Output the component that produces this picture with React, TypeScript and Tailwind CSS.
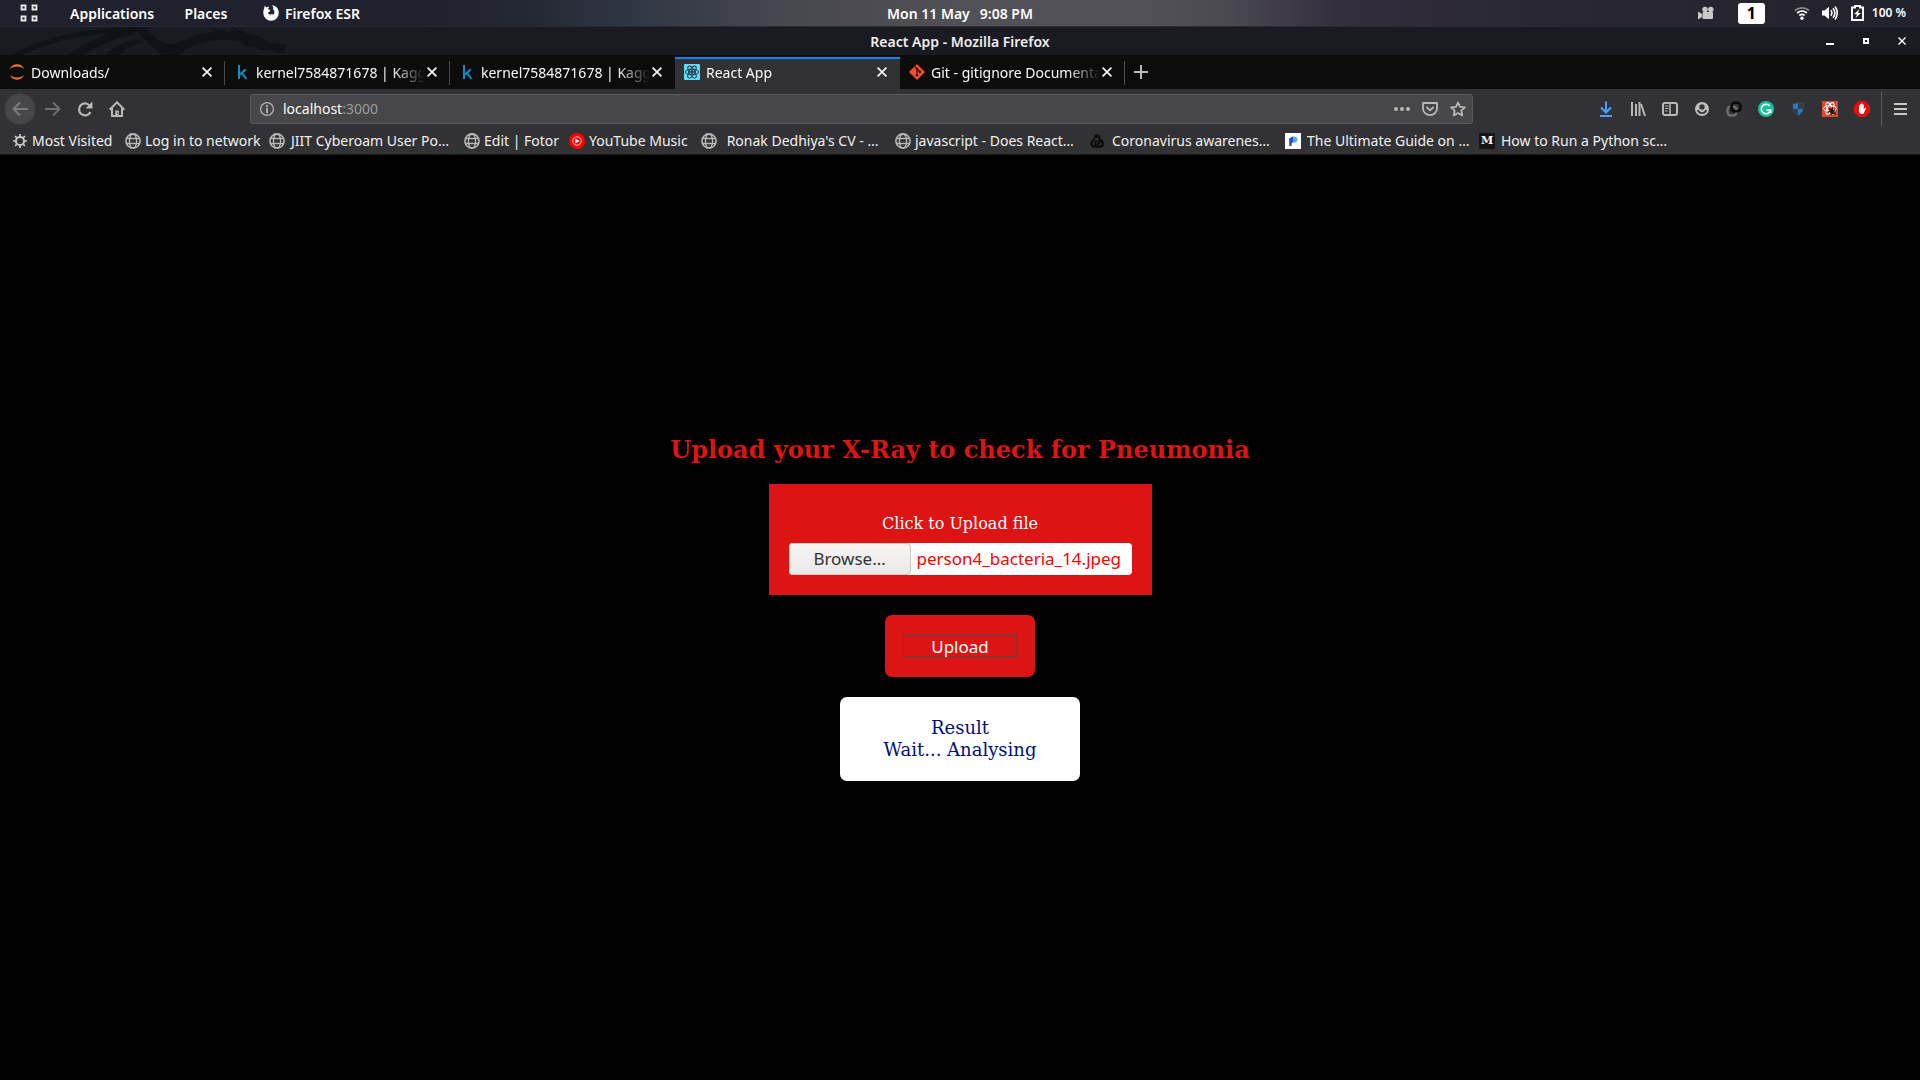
import React from "react";

type IconProps = { className?: string };

const Globe = () => (
  <svg viewBox="0 0 16 16" className="size-4 shrink-0" fill="none" stroke="#b8b8b9" strokeWidth="1.6">
    <circle cx="8" cy="8" r="7.1" />
    <ellipse cx="8" cy="8" rx="3.6" ry="7" strokeWidth="1.3" />
    <path d="M1.6 5.5h12.8M1.6 10.5h12.8" strokeWidth="1.3" />
  </svg>
);

const Gear = () => (
  <svg viewBox="0 0 16 16" className="size-4 shrink-0" fill="none" stroke="#c8c8c9">
    <circle cx="8" cy="8" r="4.1" strokeWidth="2" />
    <path
      d="M8 1v2.4M8 12.6V15M1 8h2.4M12.6 8H15M3.05 3.05l1.7 1.7M11.25 11.25l1.7 1.7M12.95 3.05l-1.7 1.7M4.75 11.25l-1.7 1.7"
      strokeWidth="1.7"
    />
  </svg>
);

const YouTubeMusic = () => (
  <svg viewBox="0 0 16 16" className="size-4 shrink-0">
    <circle cx="8" cy="8" r="8" fill="#f00" />
    <circle cx="8" cy="8" r="4.2" fill="none" stroke="#fff" strokeWidth="0.8" />
    <path d="M6.4 5.6v4.8L10.4 8z" fill="#fff" />
  </svg>
);

const Ribbon = () => (
  <svg viewBox="0 0 16 16" className="size-4 shrink-0" fill="none" stroke="#0b0b0b">
    <path d="M4.500 3.500c1-2.200 4.600-1.800 5 .2M4.600 4.500c2-1.700 4.500-.5 5 1.500" strokeWidth="1.7" />
    <path d="M4.800 5.500C2.500 7.500 1 10 1.600 12c.6 2.300 9.600 2.300 11 .3.800-2-1-4.800-3-6.300" strokeWidth="2.200" />
    <ellipse cx="7.300" cy="9.600" rx="2.300" ry="1.700" strokeWidth="1.500" />
    <path d="M2 13c4-.3 6-2 8.500-5" strokeWidth="1.400" />
  </svg>
);

const GuideIcon = () => (
  <svg viewBox="0 0 16 16" className="size-4 shrink-0">
    <path d="M0 0h16v16H0z" fill="#fff" />
    <path d="M4.200 5.200 8 3.400v5.900l-1.300.8v2.600l-2.500.4z" fill="#2f4fae" />
    <path d="M8 3.400h1.200a3.200 3.200 0 0 1 0 6.400H8z" fill="#4fb3ea" />
  </svg>
);

const MediumIcon = () => (
  <span className="flex size-4 shrink-0 items-center justify-center bg-[#151515] font-['DejaVu_Serif'] text-[11px] leading-none font-bold text-white">
    M
  </span>
);

const Jupyter = () => (
  <svg viewBox="0 0 16 16" className="size-4 shrink-0" fill="#f37726">
    <path d="M.8 5.200C2 2 4.800.3 8 .3s6 1.700 7.200 4.900C13.500 3.300 11 2.400 8 2.400S2.500 3.300.8 5.200z" />
    <path d="M.8 10.800C2 14 4.800 15.700 8 15.700s6-1.700 7.200-4.900c-1.700 1.900-4.200 2.800-7.200 2.800s-5.500-.9-7.200-2.800z" />
  </svg>
);

const KaggleIcon = () => (
  <svg viewBox="0 0 16 16" className="size-4 shrink-0" fill="none" stroke="#0f8ec3" strokeWidth="2">
    <path d="M5 1v14M11.800 5.200 6 10.400M7.800 8.800l4.500 6" />
  </svg>
);

const ReactTile = () => (
  <svg viewBox="0 0 16 16" className="size-4 shrink-0" fill="none" stroke="#20343b" strokeWidth="0.9">
    <rect width="16" height="16" rx="1" fill="#61dafb" stroke="none" />
    <ellipse cx="8" cy="8" rx="6.800" ry="2.700" />
    <ellipse cx="8" cy="8" rx="6.800" ry="2.700" transform="rotate(60 8 8)" />
    <ellipse cx="8" cy="8" rx="6.800" ry="2.700" transform="rotate(120 8 8)" />
    <circle cx="8" cy="8" r="1.300" fill="#20343b" />
  </svg>
);

const GitIcon = () => (
  <svg viewBox="0 0 16 16" className="size-4 shrink-0">
    <path d="M8 .2 15.800 8 8 15.800.2 8z" fill="#f64d27" stroke="#f64d27" strokeWidth=".4" strokeLinejoin="round" />
    <path d="M5.700 2.500 8 4.800v6.500M8 5l3 3" stroke="#2b120c" strokeWidth="1.100" fill="none" />
    <circle cx="8" cy="5" r="1.300" fill="#2b120c" />
    <circle cx="8" cy="11.200" r="1.300" fill="#2b120c" />
    <circle cx="10.900" cy="8" r="1.300" fill="#2b120c" />
  </svg>
);

const Cross = ({ className }: IconProps) => (
  <svg viewBox="0 0 10 10" className={className} fill="none" stroke="currentColor" strokeWidth="1.700">
    <path d="M.6.6l8.800 8.800M9.400.6.6 9.400" />
  </svg>
);

const FirefoxMark = () => (
  <svg viewBox="0 0 16 16" className="size-4">
    <path
      d="M1.200 3.200 1.700.8 3.600 2.500C5 1.700 6.200 1.800 6.200 1.800L5 4l2.200 1-.3 1.600-2 .9c.3 1.700 2 2.300 3.400 1.700 1-.4 1.500-.2 1.700.2-1 1.500-3.400 1.600-4.600.7 2.600 2 6.200.2 6-3 0-1.500-.9-2.500-1.700-3C11.200 3.400 10 1 8.500.3c3.500-.2 7.300 2.700 7.300 7.500A7.800 7.800 0 0 1 8 15.800 7.800 7.800 0 0 1 .3 8.200C.2 6.300.6 4.500 1.200 3.200z"
      fill="#fff"
    />
  </svg>
);

const tabs = [
  { title: "Downloads/", icon: <Jupyter />, active: false },
  { title: "kernel7584871678 | Kaggle", icon: <KaggleIcon />, active: false },
  { title: "kernel7584871678 | Kaggle", icon: <KaggleIcon />, active: false },
  { title: "React App", icon: <ReactTile />, active: true },
  { title: "Git - gitignore Documentation", icon: <GitIcon />, active: false },
];

const bookmarks = [
  { title: "Most Visited", icon: <Gear />, layout: "w-[113px] gap-1" },
  { title: "Log in to network", icon: <Globe />, layout: "w-[144px] gap-1" },
  { title: "JIIT Cyberoam User Po…", icon: <Globe />, layout: "w-[195px] gap-1.5" },
  { title: "Edit | Fotor", icon: <Globe />, layout: "w-[105px] gap-1" },
  { title: "YouTube Music", icon: <YouTubeMusic />, layout: "w-[132px] gap-1" },
  { title: "\u00a0Ronak Dedhiya's CV - …", icon: <Globe />, layout: "w-[194px] gap-1.5" },
  { title: "javascript - Does React…", icon: <Globe />, layout: "w-[195px] gap-1" },
  { title: "Coronavirus awarenes…", icon: <Ribbon />, layout: "w-[195px] gap-1.5" },
  { title: "The Ultimate Guide on …", icon: <GuideIcon />, layout: "w-[194px] gap-1.5" },
  { title: "How to Run a Python sc…", icon: <MediumIcon />, layout: "w-[195px] gap-1.5" },
];

function TopBar() {
  return (
    <header className="grid h-[27px] grid-cols-[1fr_auto_1fr] items-center border-b border-[#2a2b30] bg-[linear-gradient(90deg,#20212c_0%,#20212c_22%,#242935_28%,#303744_33%,#47474f_41%,#515057_50%,#515057_60%,#4a4851_64%,#322d3b_70%,#292832_80%,#22222c_100%)] text-[14px] font-semibold text-white">
      <div className="flex items-center">
        <button aria-label="Show applications" className="ml-5 size-[18px]">
          <svg viewBox="0 0 18 18" fill="none" stroke="#e8e8e8" strokeWidth="1.800">
            <path d="M1.500 1.500h4v4h-4zM12.500 1.500h4v4h-4zM1.500 12.500h4v4h-4zM12.500 12.500h4v4h-4z" />
          </svg>
        </button>
        <button className="ml-8 w-[82px] whitespace-nowrap">Applications</button>
        <button className="ml-8 w-[44px] whitespace-nowrap">Places</button>
        <button className="ml-[35px] flex items-center gap-[6px] whitespace-nowrap">
          <FirefoxMark />
          Firefox ESR
        </button>
      </div>
      <button className="flex gap-[10px] whitespace-nowrap">
        <span>Mon 11 May</span>
        <span>9:08 PM</span>
      </button>
      <div className="flex items-center justify-end pr-[14px]">
        <svg viewBox="0 0 16 14" className="mr-6 h-[14px] w-4" fill="#c9c9cb">
          <circle cx="7" cy="3.500" r="2.700" />
          <circle cx="12.800" cy="3.500" r="2.700" />
          <rect x="4.500" y="6" width="10.500" height="7" rx="1" />
          <path d="M0 5.500 4 8v3l-4 2.500z" />
        </svg>
        <button className="mr-[29px] h-[21px] w-[27px] rounded-[3px] bg-white text-[16px] leading-[21px] font-bold text-black">1</button>
        <svg viewBox="0 0 16 14" className="mr-3 h-[14px] w-4" fill="none" stroke="#fff" strokeWidth="1.800">
          <path d="M1 4.500c4-3.600 10-3.600 14 0" stroke="#8b8b90" />
          <path d="M3.200 7c2.800-2.500 6.800-2.500 9.600 0M5.400 9.500c1.500-1.300 3.700-1.300 5.200 0" />
          <circle cx="8" cy="12.200" r="1.700" fill="#fff" stroke="none" />
        </svg>
        <svg viewBox="0 0 16 16" className="mr-[13px] size-4" fill="none" stroke="#fff" strokeWidth="1.600">
          <path d="M0 5.500h2.500L7 1.800v12.400L2.500 10.500H0z" fill="#fff" stroke="none" />
          <path d="M8.800 5.300c1.300 1.600 1.300 3.800 0 5.400M11 3.300c2.300 2.800 2.300 6.600 0 9.400M13 1.500c3 3.800 3 9.200 0 13" />
        </svg>
        <svg viewBox="0 0 13 16" className="mr-2 h-4 w-[13px]">
          <path d="M4 1h5v1.500h3V15H1V2.500h3z" fill="none" stroke="#fff" strokeWidth="2" />
          <path d="M8.500 4 3 9.300h3L4.500 13 10 8H7z" fill="#fff" />
        </svg>
        <span className="text-[12px] whitespace-nowrap">100 %</span>
      </div>
    </header>
  );
}

function TitleBar() {
  return (
    <div className="grid h-7 grid-cols-[1fr_auto_1fr] items-center bg-[#1a1b22] text-[14px] font-semibold text-[#eeeeec]">
      <svg viewBox="0 0 300 28" preserveAspectRatio="none" className="h-7 w-[288px]" fill="#111217">
        <path d="M12 28C45 10 85 1 140 0h18l-8 4C110 5 60 10 24 28z" />
        <path d="M70 28C90 15 112 5 136 1l6 6C120 11 100 19 88 28z" />
        <path d="M110 28c8-8 20-14 34-16l6 3c-12 3-20 7-25 13z" />
        <path d="M140 0h10c8 8 14 14 26 17 14 0 22-9 38-11l12-1-10-5 14 4 3-1 5 3 4-3 6 4-6-7 14 6 14 3 8 6 12 2 9 1-4 8-14-3-8 1-8-4-10-1-6-5c-14-2-32-1-46 4-8 3-12 8-18 10l-14 1c-14-8-22-18-31-28z" />
      </svg>
      <span className="whitespace-nowrap">React App - Mozilla Firefox</span>
      <div className="flex items-center justify-end gap-[27px] pr-[14px] text-white">
        <button aria-label="Minimize" className="mt-[5px] h-[2px] w-2 bg-current" />
        <button aria-label="Restore" className="ml-[2px] size-[6px] border-2 border-current" />
        <button aria-label="Close window" className="ml-[2px]">
          <Cross className="size-2" />
        </button>
      </div>
    </div>
  );
}

function TabStrip() {
  return (
    <nav aria-label="Tabs" className="flex h-[34px] bg-[#0c0c0d] text-[14px] text-[#f9f9fa]">
      {tabs.map((tab, i) => (
        <div
          key={i}
          className={
            tab.active
              ? "mt-[2px] flex w-[225px] items-center border-t-2 border-[#0a84ff] bg-[#323234] pr-[13px] pb-1"
              : "relative flex w-[225px] items-center pr-[13px] after:absolute after:top-[6px] after:right-0 after:h-6 after:w-px after:bg-[#4c4c4d] nth-3:after:hidden"
          }
        >
          <button className="flex min-w-0 flex-1 items-center gap-[6px] pl-[9px] text-left">
            {tab.icon}
            <span className="min-w-0 flex-1 overflow-hidden mask-[linear-gradient(90deg,#000_calc(100%-32px),transparent)] whitespace-nowrap">
              {tab.title}
            </span>
          </button>
          <button aria-label={"Close " + tab.title} className="ml-[2px]">
            <Cross className="size-[10px]" />
          </button>
        </div>
      ))}
      <button aria-label="New tab" className="ml-[9px]">
        <svg viewBox="0 0 14 14" className="size-[14px]" stroke="#b9b9ba" strokeWidth="2">
          <path d="M7 0v14M0 7h14" />
        </svg>
      </button>
    </nav>
  );
}

const toolIcons: { label: string; icon: React.ReactNode }[] = [
  {
    label: "Downloads",
    icon: (
      <g fill="none" stroke="#45a1ff" strokeWidth="2">
        <path d="M8 .5v10.500M3 6.500l5 5 5-5M2 15h12" />
      </g>
    ),
  },
  {
    label: "Library",
    icon: (
      <g fill="none" stroke="#b8b8b9" strokeWidth="2">
        <path d="M2 1v14M6 3v12M9.500 1v14" />
        <path d="m11 3 4 12" />
      </g>
    ),
  },
  {
    label: "Sidebars",
    icon: (
      <g fill="none" stroke="#b8b8b9" strokeWidth="2">
        <rect x="1" y="2" width="14" height="12" rx="2" />
        <path d="M8 2v12" strokeWidth="1.500" />
        <path d="M3 5h3.500M3 7.500h3.500M3 10h2.500" strokeWidth="1" />
      </g>
    ),
  },
  {
    label: "Account",
    icon: (
      <g>
        <circle cx="8" cy="8" r="7" fill="#c0c0c1" />
        <circle cx="8" cy="6" r="2.700" fill="#38383a" />
        <path d="M3.700 9.200c.8 2 2.300 3 4.300 3s3.500-1 4.300-3" fill="none" stroke="#38383a" strokeWidth="1.800" />
      </g>
    ),
  },
  {
    label: "Containers",
    icon: (
      <g fill="none" strokeWidth="2.600">
        <rect x="1.500" y="5.500" width="9" height="9" rx="3.500" stroke="#6b6b6d" />
        <rect x="5.500" y="1.800" width="9" height="8.500" rx="3.500" stroke="#090909" />
        <path d="M5 8.500c1.500 2 4 2.500 6 1.500" stroke="#090909" strokeWidth="1.800" />
      </g>
    ),
  },
  {
    label: "Grammarly",
    icon: (
      <g>
        <circle cx="8" cy="8" r="8" fill="#15c39a" />
        <path d="M11.600 5A4.700 4.700 0 1 0 12.600 9H8.500M12.700 8.500v3.500" fill="none" stroke="#fff" strokeWidth="1.600" />
      </g>
    ),
  },
  {
    label: "Shield",
    icon: (
      <g>
        <path d="M8 1.300 13.300 3v4.500c0 3.500-2.500 5.800-5.300 7.300-2.800-1.500-5.300-3.800-5.300-7.300V3z" fill="#343c44" stroke="#3c454e" />
        <path d="M8 2v6H3.200V3.500zM8 8h4.800c-.3 3-2.300 5-4.800 6.300z" fill="#2a7bcf" />
      </g>
    ),
  },
  {
    label: "React tools",
    icon: (
      <g fill="none" stroke="#fff">
        <path d="M0 0h16v16H0z" fill="#d9482f" stroke="none" />
        <ellipse cx="8" cy="7.500" rx="6.500" ry="2.600" />
        <ellipse cx="8" cy="7.500" rx="6.500" ry="2.600" transform="rotate(60 8 7.500)" />
        <ellipse cx="8" cy="7.500" rx="6.500" ry="2.600" transform="rotate(120 8 7.500)" />
        <path d="M7 7.500l7 6M6 11l7-2M9 14l2-8" stroke="#2a1713" strokeWidth="1.300" />
        <ellipse cx="10" cy="10.500" rx="2.200" ry="3" fill="#2a1713" stroke="none" transform="rotate(-35 10 10.500)" />
      </g>
    ),
  },
  {
    label: "Ad blocker",
    icon: (
      <g>
        <path d="M4.700 0h6.600L16 4.700v6.600L11.300 16H4.700L0 11.300V4.700z" fill="#e40d12" />
        <path
          d="M5 8.500V4.800c0-.8 1-.8 1 0V3.500c0-.8 1.200-.8 1.200 0v-.6c0-.8 1.300-.8 1.300 0v.9c0-.8 1.200-.8 1.200 0v4.400l1.100-1.200c.6-.5 1.300 0 1 .7l-1.700 3.800C9.600 12.600 8.900 13 8 13c-1.800 0-3-1.200-3-3z"
          fill="#fff"
        />
      </g>
    ),
  },
];

function NavBar() {
  return (
    <div className="flex h-10 items-center bg-[#323234] pl-1 text-[#b8b8b9]">
      <button aria-label="Back" className="flex size-8 items-center justify-center rounded-full border border-[#3b3b3d] bg-[#474749] text-[#7b7b7d]">
        <svg viewBox="0 0 16 16" className="size-4" fill="none" stroke="currentColor" strokeWidth="2">
          <path d="M16 8H1.500M8 1.500 1.500 8 8 14.500" />
        </svg>
      </button>
      <button aria-label="Forward" className="ml-[9px] text-[#6f6f71]">
        <svg viewBox="0 0 16 16" className="size-4" fill="none" stroke="currentColor" strokeWidth="2">
          <path d="M0 8h14.500M8 1.500 14.500 8 8 14.500" />
        </svg>
      </button>
      <button aria-label="Reload" className="ml-4">
        <svg viewBox="0 0 16 16" className="size-4" fill="none" stroke="currentColor" strokeWidth="2.200">
          <path d="M13.300 5.500A6 6 0 1 0 13.500 11" />
          <path d="M15.500.5v7H8.500z" fill="currentColor" stroke="none" />
        </svg>
      </button>
      <button aria-label="Home" className="ml-4">
        <svg viewBox="0 0 16 16" className="size-4" fill="none" stroke="currentColor" strokeWidth="2">
          <path d="M.7 8.700 8 1.300l7.300 7.400M3 7v8h10V7" />
          <path d="M8 15.500V9.500" strokeWidth="3.500" />
          <path d="M8 12.200h1" stroke="#323234" strokeWidth="1" />
        </svg>
      </button>
      <label className="mr-[125px] ml-[125px] flex h-[30px] flex-1 items-center rounded-[3px] border border-[#5a5a5c] bg-[#474749] pr-[6px] pl-[9px]">
        <svg viewBox="0 0 14 14" className="size-[14px]" fill="none" stroke="currentColor">
          <circle cx="7" cy="7" r="6.400" strokeWidth="1.200" />
          <path d="M7 6v5M7 3v2" strokeWidth="1.800" />
        </svg>
        <span className="relative ml-[9px] flex-1 text-[14px] leading-5">
          <input
            aria-label="Address"
            defaultValue="localhost:3000"
            className="w-full bg-transparent text-transparent caret-white outline-none"
          />
          <span aria-hidden="true" className="pointer-events-none absolute top-0 left-0 text-[#9c9c9d]">
            <span className="text-[#f9f9fa]">localhost</span>:3000
          </span>
        </span>
        <svg viewBox="0 0 16 16" className="size-4" fill="currentColor">
          <circle cx="2" cy="8" r="2" />
          <circle cx="8" cy="8" r="2" />
          <circle cx="14" cy="8" r="2" />
        </svg>
        <svg viewBox="0 0 16 16" className="ml-3 size-4" fill="none" stroke="currentColor" strokeWidth="1.800">
          <path d="M1 2h14v5.500a7 6.600 0 0 1-14 0z" strokeLinejoin="round" />
          <path d="m4.500 6 3.500 3.300L11.500 6" />
        </svg>
        <svg viewBox="0 0 16 16" className="ml-3 size-4" fill="none" stroke="currentColor" strokeWidth="1.700" strokeLinejoin="round">
          <path d="m8 1.400 2 4.400 4.900.5-3.600 3.300 1 4.900L8 12l-4.300 2.500 1-4.900L1.100 6.300 6 5.800z" />
        </svg>
      </label>
      <div className="flex items-center gap-4">
        {toolIcons.map((t) => (
          <button key={t.label} aria-label={t.label}>
            <svg viewBox="0 0 16 16" className="size-4">
              {t.icon}
            </svg>
          </button>
        ))}
      </div>
      <div className="ml-[11px] h-[34px] w-px bg-[#5b5b5d]" />
      <button aria-label="Open menu" className="mr-[13px] ml-3">
        <svg viewBox="0 0 14 14" className="h-[14px] w-[13px]" stroke="#c8c8c9" strokeWidth="2" preserveAspectRatio="none">
          <path d="M0 2h14M0 7h14M0 12h14" />
        </svg>
      </button>
    </div>
  );
}

function Bookmarks() {
  return (
    <nav aria-label="Bookmarks" className="flex h-[26px] border-b border-[#1b1b1d] bg-[#323234] pb-[2px] pl-3 text-[14px] text-[#f0f0f1]">
      {bookmarks.map((b) => (
        <a key={b.title} href="#" className={"flex items-center whitespace-nowrap " + b.layout}>
          {b.icon}
          {b.title}
        </a>
      ))}
    </nav>
  );
}

export default function App() {
  return (
    <div className="flex min-h-screen flex-col bg-black font-['Noto_Sans',sans-serif]">
      <TopBar />
      <TitleBar />
      <TabStrip />
      <NavBar />
      <Bookmarks />
      <main className="flex flex-1 flex-col items-center justify-center gap-5 pb-[18px] font-['DejaVu_Serif',serif]">
        <h1 className="text-[24px] leading-7 font-bold text-[#dc1414]">Upload your X-Ray to check for Pneumonia</h1>
        <div className="flex flex-col items-center bg-[#dc1414] px-5 pt-[30px] pb-5 text-white">
          <label htmlFor="xray" className="text-[16px] leading-5">
            Click to Upload file
          </label>
          <label
            htmlFor="xray"
            className="mt-[9px] flex h-8 w-[343px] items-center rounded-[4px] bg-white font-['Noto_Sans',sans-serif] text-[17px] leading-6 text-[#f00]"
          >
            <input id="xray" type="file" className="sr-only" />
            <span className="flex h-full w-[122px] items-center justify-center rounded-[4px] border border-[#cdc7c2] bg-linear-to-b from-[#f6f5f4] to-[#eae9e7] text-[#2e3436]">
              Browse…
            </span>
            <span className="ml-[6px] whitespace-nowrap">person4_bacteria_14.jpeg</span>
          </label>
        </div>
        <button className="flex h-[62px] w-[150px] items-center justify-center rounded-[7px] bg-[#dc1414] font-['Noto_Sans',sans-serif] text-[17px] text-white">
          <span className="h-[22px] w-[114px] border border-dotted border-[#3d4a45] leading-[22px]">Upload</span>
        </button>
        <output className="w-60 rounded-[7px] bg-white py-5 text-center text-[18px] leading-[22px] text-[#000f80]">
          Result
          <br />
          Wait... Analysing
        </output>
      </main>
    </div>
  );
}
